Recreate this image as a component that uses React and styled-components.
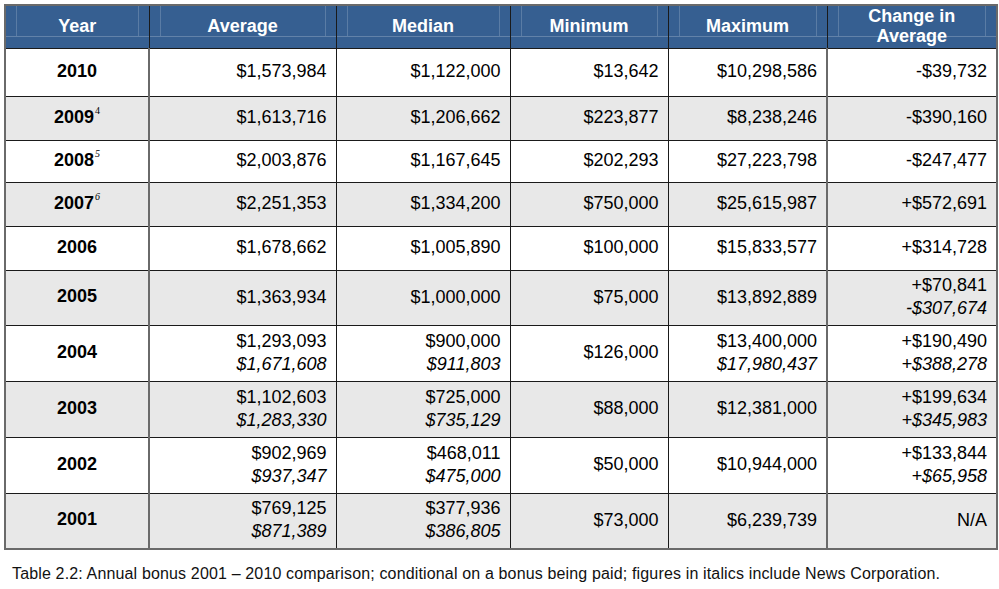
import React from 'react';
import styled, { createGlobalStyle } from 'styled-components';

const GlobalStyle = createGlobalStyle`
  html, body {
    margin: 0;
    padding: 0;
    background: #fff;
  }
  body {
    font-family: "Liberation Sans", Arial, sans-serif;
    color: #000;
  }
`;

const Page = styled.div`
  width: 999px;
  height: 589px;
  padding: 4px 0 0 4px;
  box-sizing: border-box;
  overflow: hidden;
`;

const Table = styled.table`
  width: 992px;
  table-layout: fixed;
  border-collapse: collapse;
  border: 2px solid #6a6a6a;
  font-size: 18px;
`;

const HeadCell = styled.th`
  height: 43px;
  padding: 0 10px 1px;
  box-sizing: border-box;
  color: #fff;
  font-weight: bold;
  font-size: 18px;
  line-height: 20px;
  text-align: center;
  vertical-align: middle;
  border: 1.5px solid #1a1a1a;
  border-top: 2px solid #6a6a6a;
  background:
    linear-gradient(rgba(255, 255, 255, 0.22), rgba(255, 255, 255, 0.22)) 0 calc(100% - 11px) / 100% 1px no-repeat,
    linear-gradient(rgba(255, 255, 255, 0.18), rgba(255, 255, 255, 0.18)) 10px 0 / 1px calc(100% - 12px) no-repeat,
    linear-gradient(rgba(255, 255, 255, 0.18), rgba(255, 255, 255, 0.18)) calc(100% - 10px) 0 / 1px calc(100% - 12px) no-repeat,
    #365f91;
`;

const Row = styled.tr`
  height: ${p => p.$h}px;
  background: ${p => (p.$shade ? '#e8e8e8' : '#ffffff')};
`;

const YearCell = styled.td`
  text-align: center;
  font-weight: bold;
  padding: 0 0 2px;
  border: 1.5px solid #1a1a1a;
  border-right: 2px solid #6a6a6a;
`;

const Sup = styled.sup`
  font-family: "Liberation Serif", "Times New Roman", serif;
  font-weight: normal;
  font-style: ${p => (p.$italic ? 'italic' : 'normal')};
  font-size: 10px;
  vertical-align: 9px;
  line-height: 0;
  margin-left: 1px;
`;

const Cell = styled.td`
  text-align: right;
  padding: 0 9px 1px 0;
  border: 1.5px solid #1a1a1a;
  ${p => p.$gray && 'border-right: 2px solid #6a6a6a;'}
`;

const Line = styled.div`
  line-height: 23px;
  font-style: ${p => (p.$italic ? 'italic' : 'normal')};
`;

const Caption = styled.p`
  margin: 15px 0 0 8px;
  font-size: 16px;
  letter-spacing: 0.15px;
  color: #111;
`;

const rows = [
  { year: '2010', h: 48, avg: ['$1,573,984'], med: ['$1,122,000'], min: ['$13,642'], max: ['$10,298,586'], chg: ['-$39,732'] },
  { year: '2009', sup: '4', h: 44, avg: ['$1,613,716'], med: ['$1,206,662'], min: ['$223,877'], max: ['$8,238,246'], chg: ['-$390,160'] },
  { year: '2008', sup: '5', supItalic: true, h: 42, avg: ['$2,003,876'], med: ['$1,167,645'], min: ['$202,293'], max: ['$27,223,798'], chg: ['-$247,477'] },
  { year: '2007', sup: '6', supItalic: true, h: 44, avg: ['$2,251,353'], med: ['$1,334,200'], min: ['$750,000'], max: ['$25,615,987'], chg: ['+$572,691'] },
  { year: '2006', h: 44, avg: ['$1,678,662'], med: ['$1,005,890'], min: ['$100,000'], max: ['$15,833,577'], chg: ['+$314,728'] },
  { year: '2005', h: 55, avg: ['$1,363,934'], med: ['$1,000,000'], min: ['$75,000'], max: ['$13,892,889'], chg: ['+$70,841', '-$307,674'] },
  { year: '2004', h: 56, avg: ['$1,293,093', '$1,671,608'], med: ['$900,000', '$911,803'], min: ['$126,000'], max: ['$13,400,000', '$17,980,437'], chg: ['+$190,490', '+$388,278'] },
  { year: '2003', h: 56, avg: ['$1,102,603', '$1,283,330'], med: ['$725,000', '$735,129'], min: ['$88,000'], max: ['$12,381,000'], chg: ['+$199,634', '+$345,983'] },
  { year: '2002', h: 56, avg: ['$902,969', '$937,347'], med: ['$468,011', '$475,000'], min: ['$50,000'], max: ['$10,944,000'], chg: ['+$133,844', '+$65,958'] },
  { year: '2001', h: 56, avg: ['$769,125', '$871,389'], med: ['$377,936', '$386,805'], min: ['$73,000'], max: ['$6,239,739'], chg: ['N/A'] },
];

const widths = [144, 187, 174, 158, 159, 170];

function Values({ values, gray }) {
  return (
    <Cell $gray={gray}>
      {values.map((v, i) => (
        <Line key={i} $italic={i === 1}>{v}</Line>
      ))}
    </Cell>
  );
}

export default function App() {
  return (
    <Page>
      <GlobalStyle />
      <Table>
        <colgroup>
          {widths.map((w, i) => <col key={i} style={{ width: w }} />)}
        </colgroup>
        <thead>
          <tr>
            <HeadCell>Year</HeadCell>
            <HeadCell>Average</HeadCell>
            <HeadCell>Median</HeadCell>
            <HeadCell>Minimum</HeadCell>
            <HeadCell>Maximum</HeadCell>
            <HeadCell>Change in<br />Average</HeadCell>
          </tr>
        </thead>
        <tbody>
          {rows.map((r, i) => (
            <Row key={r.year} $h={r.h} $shade={i % 2 === 1}>
              <YearCell>
                {r.year}
                {r.sup && <Sup $italic={r.supItalic}>{r.sup}</Sup>}
              </YearCell>
              <Values values={r.avg} />
              <Values values={r.med} />
              <Values values={r.min} />
              <Values values={r.max} gray />
              <Values values={r.chg} />
            </Row>
          ))}
        </tbody>
      </Table>
      <Caption>
        Table 2.2: Annual bonus 2001 – 2010 comparison; conditional on a bonus being paid; figures in italics include News Corporation.
      </Caption>
    </Page>
  );
}
